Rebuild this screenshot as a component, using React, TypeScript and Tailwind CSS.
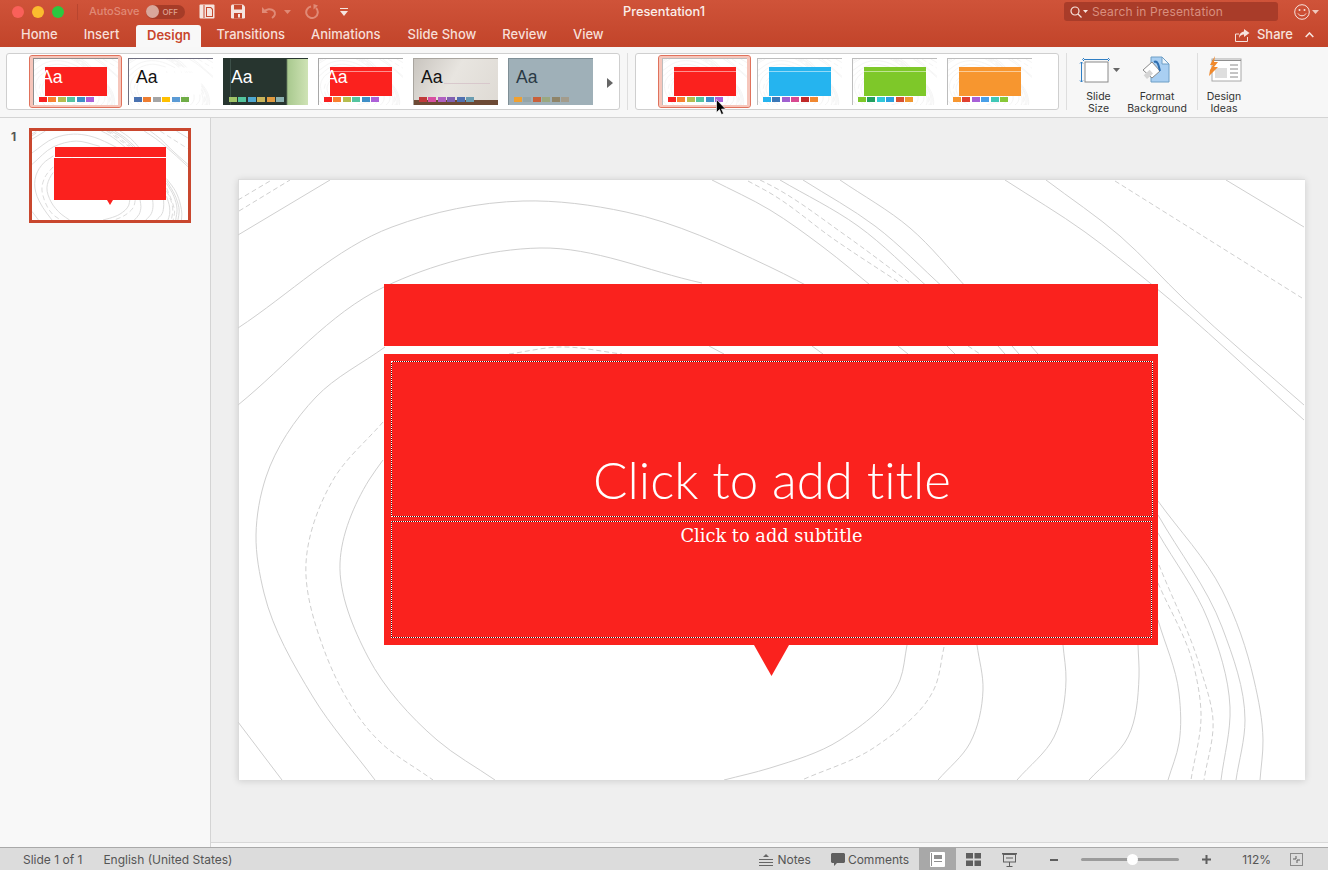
import React from "react";

type P = [number, number];
const spline = (p: P[]) => {
  let d = `M${p[0][0]} ${p[0][1]}`;
  const dist = (a: P, b: P) => Math.hypot(b[0] - a[0], b[1] - a[1]) || 1;
  const slope = (i: number): P => {
    const b = p[i];
    if (i === 0) {
      const l = dist(b, p[1]);
      return [(p[1][0] - b[0]) / l, (p[1][1] - b[1]) / l];
    }
    if (i === p.length - 1) {
      const l = dist(p[i - 1], b);
      return [(b[0] - p[i - 1][0]) / l, (b[1] - p[i - 1][1]) / l];
    }
    const d1 = dist(p[i - 1], b), d2 = dist(b, p[i + 1]);
    return [
      (((b[0] - p[i - 1][0]) / d1) * d2 + ((p[i + 1][0] - b[0]) / d2) * d1) / (d1 + d2),
      (((b[1] - p[i - 1][1]) / d1) * d2 + ((p[i + 1][1] - b[1]) / d2) * d1) / (d1 + d2),
    ];
  };
  for (let i = 0; i < p.length - 1; i++) {
    const b = p[i], c = p[i + 1];
    const h = dist(b, c) / 3;
    const m1 = slope(i), m2 = slope(i + 1);
    d += ` C${b[0] + m1[0] * h} ${b[1] + m1[1] * h} ${c[0] - m2[0] * h} ${c[1] - m2[1] * h} ${c[0]} ${c[1]}`;
  }
  return d;
};

const solid: P[][] = [
  [[238, 235], [330, 180]],
  [[238, 328], [392, 227], [523, 201], [626, 212], [770, 267], [823, 294]],
  [[812, 346], [823, 354]],
  [[238, 405], [384, 287], [540, 248], [702, 283]],
  [[709, 346], [724, 354]],
  [[385, 347], [316, 397], [266, 477], [256, 535], [264, 593], [313, 697], [375, 780]],
  [[383, 460], [369, 480], [340, 563], [368, 657], [437, 740], [495, 780]],
  [[238, 722], [282, 780]],
  [[907, 645], [900, 680], [840, 740], [770, 768], [724, 780]],
  [[977, 645], [983, 690], [970, 743], [938, 780]],
  [[1063, 645], [1066, 680], [1054, 737], [1017, 780]],
  [[1138, 645], [1139, 677], [1128, 737], [1089, 780]],
  [[1158, 620], [1179, 693], [1179, 743], [1168, 780]],
  [[1158, 533], [1208, 620], [1230, 707], [1221, 780]],
  [[1158, 515], [1222, 627], [1245, 720], [1236, 780]],
  [[1158, 501], [1222, 590], [1254, 680], [1263, 740], [1260, 780]],
  [[1226, 180], [1304, 227]],
  [[1005, 180], [1085, 232], [1150, 283], [1304, 420]],
  [[1046, 180], [1120, 236], [1185, 300], [1304, 405]],
  [[840, 180], [910, 228], [968, 289]],
  [[803, 180], [875, 226], [945, 289]],
  [[780, 180], [858, 226], [930, 289]],
  [[712, 180], [770, 210], [823, 247], [875, 289]],
  [[898, 346], [908, 354]],
  [[947, 346], [955, 354]],
  [[998, 346], [1005, 354]],
  [[1012, 346], [1019, 354]],
  [[1031, 346], [1038, 354]],
];
const dashed: P[][] = [
  [[238, 200], [270, 181]],
  [[239, 211], [290, 180]],
  [[383, 422], [333, 480], [306, 563], [323, 647], [378, 740], [433, 780]],
  [[509, 354], [560, 347], [622, 354]],
  [[944, 647], [935, 687], [875, 747], [802, 780]],
  [[1158, 583], [1194, 667], [1201, 713], [1191, 780]],
  [[1159, 565], [1201, 670], [1213, 720], [1204, 780]],
  [[1115, 181], [1302, 298]],
  [[748, 181], [770, 193], [835, 240], [900, 283]],
  [[760, 180], [770, 185], [845, 235], [910, 283]],
  [[968, 346], [980, 354]],
];

function Curves({ className }: { className: string }) {
  return (
    <svg className={className} viewBox="238 180 1067 600" preserveAspectRatio="none">
      {solid.map((p, i) => (
        <path key={i} d={spline(p)} fill="none" stroke="#cfcfcf" strokeWidth="1" vectorEffect="non-scaling-stroke" />
      ))}
      {dashed.map((p, i) => (
        <path key={i} d={spline(p)} fill="none" stroke="#cfcfcf" strokeWidth="1" strokeDasharray="5 3" vectorEffect="non-scaling-stroke" />
      ))}
    </svg>
  );
}

const ui = { fontFamily: "Inter, 'Liberation Sans', sans-serif" };

function Swatches({ colors, left }: { colors: string[]; left: number }) {
  return (
    <div className="absolute top-[38px] flex gap-[1.4px]" style={{ left }}>
      {colors.map((c, i) => (
        <div key={i} className="w-2 h-[5px]" style={{ background: c }} />
      ))}
    </div>
  );
}

type ThumbProps = {
  bg?: string;
  edge: string;
  colors: string[];
  swLeft: number;
  aa?: string;
  aaLeft?: number;
  block?: string;
  blockLeft?: number;
  line?: boolean;
  selected?: boolean;
  extra?: React.ReactNode;
};

function Thumb({ bg = "#ffffff", edge, colors, swLeft, aa, aaLeft = 0, block, blockLeft = 0, line, selected, extra }: ThumbProps) {
  return (
    <div className="relative w-[85px] h-[47px] shrink-0">
      {selected && (
        <div className="absolute -left-[4px] -right-[4px] -top-[3px] -bottom-[3px] rounded-[3px] border border-[#e0725c] shadow-[inset_0_0_0_3px_#f6c6bb]" />
      )}
      <div className="absolute inset-0 overflow-hidden border-t border-l" style={{ background: bg, borderColor: edge }}>
        {!extra && bg === "#ffffff" && <Curves className="absolute inset-0 w-full h-full opacity-20" />}
        {extra}
        {block && (
          <div className="absolute top-[8px] h-[29px] w-[62px]" style={{ left: blockLeft, background: block }}>
            {line && <div className="h-px mt-[4px] bg-white/50" />}
          </div>
        )}
        {aa && (
          <div className="absolute top-[5px] text-[17.5px] leading-[26px]" style={{ left: aaLeft, color: aa, fontFamily: "'Liberation Sans', sans-serif" }}>
            Aa
          </div>
        )}
        <Swatches colors={colors} left={swLeft} />
      </div>
    </div>
  );
}

const Caret = ({ c = "#ffffff" }: { c?: string }) => (
  <svg width="7" height="4" viewBox="0 0 7 4"><path d="M0 0h7L3.500 4z" fill={c} /></svg>
);

function Tab({ label, ml, active }: { label: string; ml: number; active?: boolean }) {
  return (
    <div
      className={
        active
          ? "h-[22px] mt-[2px] w-[65px] flex items-center justify-center rounded-t-[3px] bg-[#f8f8f8] text-[#c8452b] font-semibold"
          : "h-[24px] flex items-center text-[#f7dfd8] font-medium"
      }
      style={{ marginLeft: ml }}
    >
      {label}
    </div>
  );
}

function RibbonLabel({ a, b }: { a: string; b: string }) {
  return (
    <div className="text-[10.5px] leading-[12px] text-center text-[#333]">
      <div>{a}</div>
      <div>{b}</div>
    </div>
  );
}

export default function App() {
  const red = ["#f92020", "#f9802f", "#b5bd4e", "#54c4a0", "#3e8fc8", "#ac60d8"];
  return (
    <div className="w-[1328px] h-[870px] overflow-hidden flex flex-col bg-[#efefef] relative" style={ui}>
      {/* title + tabs */}
      <div className="h-[47px] shrink-0 bg-gradient-to-b from-[#cf5339] to-[#c2442a]">
        <div className="h-[23px] grid grid-cols-[1fr_auto_1fr] items-center">
          <div className="flex items-center pl-[12px]">
            <div className="w-3 h-3 rounded-full bg-[#f9605a]" />
            <div className="w-3 h-3 rounded-full bg-[#fbbc2e] ml-2" />
            <div className="w-3 h-3 rounded-full bg-[#2bc840] ml-2" />
            <div className="w-px h-[16px] bg-[#b8452f] ml-[13px]" />
            <div className="ml-[11px] text-[11px] font-medium text-[#e08a76]">AutoSave</div>
            <div className="ml-[7px] w-[39px] h-[14px] rounded-full bg-[#a63c28] flex items-center">
              <div className="w-[13px] h-[13px] rounded-full bg-[#d9a79b]" />
              <div className="ml-[3px] text-[8px] font-medium text-[#dfa494]">OFF</div>
            </div>
            <svg className="ml-[14px]" width="16" height="15" viewBox="0 0 16 15">
              <rect x="0.5" y="0.5" width="15" height="14" rx="1" fill="#f5e5e0" />
              <path d="M5 1v13" stroke="#c64a30" />
              <path d="M7 3h5l2 2v8H7z" fill="#c64a30" />
              <path d="M8 4h3.500L13 5.500V12H8z" fill="#f5e5e0" />
            </svg>
            <svg className="ml-[16px]" width="14" height="15" viewBox="0 0 14 15">
              <path d="M0 1.500 1 .5h11l2 2V14l-1 .5H1L0 14z" fill="#f5e5e0" />
              <rect x="3" y="1" width="8" height="4.500" fill="#c64a30" />
              <rect x="3" y="9" width="8" height="5.500" fill="#c64a30" />
              <rect x="7" y="10" width="2" height="3.500" fill="#f5e5e0" />
            </svg>
            <svg className="ml-[16px]" width="16" height="14" viewBox="0 0 16 14" fill="none">
              <path d="M1 2v6h6z" fill="#e08a76" />
              <path d="M3 7c2-3 7-4 10-1 2 2 1 5-2 7" stroke="#e08a76" strokeWidth="2" />
            </svg>
            <div className="ml-[7px]"><Caret c="#e08a76" /></div>
            <svg className="ml-[14px]" width="15" height="15" viewBox="0 0 15 15" fill="none">
              <path d="M11 4A5.800 5.800 0 1 1 6 2.500" stroke="#e08a76" strokeWidth="2" />
              <path d="M8.500 0v5.500L13 1.500z" fill="#e08a76" />
            </svg>
            <svg className="ml-[20px]" width="8" height="8" viewBox="0 0 8 8">
              <path d="M0 0h8v1H0zM0 3h8L4 8z" fill="#f5e5e0" />
            </svg>
          </div>
          <div className="text-[12.8px] font-medium text-[#fbeeea]">Presentation1</div>
          <div className="flex items-center justify-end">
            <div className="w-[214px] h-[19px] rounded-[3px] bg-[#a93c29] flex items-center pl-[6px]">
              <svg width="12" height="12" viewBox="0 0 12 12" fill="none">
                <circle cx="5" cy="5" r="4" stroke="#f7e3dd" strokeWidth="1.200" />
                <path d="M8 8l3.500 3.500" stroke="#f7e3dd" strokeWidth="1.200" />
              </svg>
              <div className="ml-[1px]"><svg width="5" height="3" viewBox="0 0 7 4"><path d="M0 0h7L3.500 4z" fill="#f7e3dd" /></svg></div>
              <div className="ml-[4px] text-[12px] tracking-[0.15px] text-[#d98f7f]">Search in Presentation</div>
            </div>
            <svg className="ml-[16px]" width="16" height="16" viewBox="0 0 16 16" fill="none">
              <circle cx="8" cy="8" r="7.300" stroke="#f7e3dd" />
              <circle cx="5.500" cy="6" r="1" fill="#f7e3dd" />
              <circle cx="10.500" cy="6" r="1" fill="#f7e3dd" />
              <path d="M4 9.500c1.500 3 6.500 3 8 0" stroke="#f7e3dd" />
            </svg>
            <div className="ml-[2px] mr-[9px]"><Caret c="#f0c8bd" /></div>
          </div>
        </div>
        <div className="h-[24px] flex text-[13px]">
          <Tab label="Home" ml={21} />
          <Tab label="Insert" ml={26} />
          <Tab label="Design" ml={17} active />
          <Tab label="Transitions" ml={15} />
          <Tab label="Animations" ml={26} />
          <Tab label="Slide Show" ml={27} />
          <Tab label="Review" ml={26} />
          <Tab label="View" ml={26} />
          <div className="ml-auto flex items-center pr-[14px] text-[#f7e3dd] font-medium">
            <svg width="15" height="13" viewBox="0 0 15 13" fill="none">
              <path d="M4 5H.5v7.500h12V8" stroke="#f7e3dd" />
              <path d="M9 0l5.500 4L9 8V5.500C6.500 5.500 5 7 4 9c0-4 2-6 5-6.500z" fill="#f7e3dd" />
            </svg>
            <div className="ml-[7px]">Share</div>
            <svg className="ml-[12px]" width="9" height="6" viewBox="0 0 9 6" fill="none">
              <path d="M.7 5l3.800-4 3.800 4" stroke="#f7e3dd" strokeWidth="1.600" />
            </svg>
          </div>
        </div>
      </div>

      {/* ribbon */}
      <div className="h-[71px] shrink-0 bg-[#f7f7f7] border-b border-[#d4d4d4] flex items-start pt-[6px] pl-[6px]">
        <div className="w-[614px] h-[57px] border border-[#cfcfcf] rounded-[3px] bg-white flex pl-[26px] pt-[4px] gap-[10px]">
          <Thumb edge="#8f8f8f" colors={red} swLeft={5} aa="#ffffff" aaLeft={7} block="#fb211e" blockLeft={11} selected />
          <Thumb edge="#6f6f80" colors={["#4a72b0", "#ed7d31", "#a5a5a5", "#ffc000", "#5b9bd5", "#70ad47"]} swLeft={5} aa="#111111" aaLeft={7} />
          <Thumb bg="linear-gradient(90deg,#27352f 74%,#a9c98f 76%,#cfe3b5 100%)" edge="#27352f" colors={["#a0c468", "#52c49c", "#4fa8d0", "#c8b45a", "#e09a40", "#8ab0b0"]} swLeft={5} aa="#ffffff" aaLeft={7} extra={<div className="absolute left-[6px] top-0 bottom-0 w-px bg-[#3d5049]" />} />
          <Thumb edge="#a8a8a8" colors={red} swLeft={5} aa="#ffffff" aaLeft={7} block="#fb211e" blockLeft={11} line />
          <Thumb bg="linear-gradient(120deg,#c9c5bf 0%,#e8e5e0 45%,#dedad4 100%)" edge="#a9a59f" colors={["#c03a3a", "#d84fa0", "#b060c0", "#8060b0", "#5070b0", "#6a9cb0"]} swLeft={5} aa="#111111" aaLeft={7} extra={<><div className="absolute left-[30px] right-[8px] top-[24px] h-px bg-[#d8c8cc]" /><div className="absolute left-0 right-0 bottom-0 h-[5px] bg-[#6d4a35]" /></>} />
          <Thumb bg="#9fb0b8" edge="#7f8f96" colors={["#f0a030", "#95a5a8", "#c8603a", "#9aa880", "#8f8468", "#a39c8c"]} swLeft={5} aa="#2a3a45" aaLeft={7} />
          <div className="ml-[3px] mt-[20px]">
            <svg width="8" height="10" viewBox="0 0 8 10"><path d="M1 0l6 5-6 5z" fill="#666" /></svg>
          </div>
        </div>
        <div className="ml-[7px] w-px h-[57px] bg-[#dedede]" />
        <div className="ml-[7px] w-[424px] h-[57px] border border-[#cfcfcf] rounded-[3px] bg-white flex pl-[26px] pt-[4px] gap-[10px]">
          <Thumb edge="#bdbdbd" colors={red} swLeft={5} block="#fb211e" blockLeft={11} line selected />
          <Thumb edge="#bdbdbd" colors={["#25b4ef", "#3a78b8", "#a060d0", "#d84890", "#c02828", "#f08830"]} swLeft={5} block="#25b4ef" blockLeft={11} line />
          <Thumb edge="#bdbdbd" colors={["#7ec829", "#22a060", "#30c8d8", "#28a0e0", "#d85030", "#f09830"]} swLeft={5} block="#7ec829" blockLeft={11} line />
          <Thumb edge="#bdbdbd" colors={["#f7962f", "#e04030", "#a860d8", "#48a0e8", "#40c8b8", "#88c838"]} swLeft={5} block="#f7962f" blockLeft={11} line />
        </div>
        <div className="ml-[7px] w-px h-[57px] bg-[#dedede]" />
        <div className="w-[63px] flex flex-col items-center">
          <svg className="mt-[4px] mb-[7px] mr-[3px]" width="46" height="27" viewBox="0 0 46 27" fill="none">
            <rect x="11" y="5" width="23" height="20" fill="#fff" stroke="#8a8a8a" />
            <path d="M10 2.500h24M10 1l-1.500 1.500L10 4M34 1l1.500 1.500L34 4" stroke="#2f7ec4" />
            <path d="M7.500 5v20M6 6.500 7.500 5 9 6.500M6 23.500 7.500 25 9 23.500" stroke="#2f7ec4" />
            <path d="M39 11h7l-3.500 4z" fill="#666" />
          </svg>
          <RibbonLabel a="Slide" b="Size" />
        </div>
        <div className="w-[54px] flex flex-col items-center">
          <svg className="mt-[3px] mb-[8px]" width="32" height="27" viewBox="0 0 32 27" fill="none">
            <path d="M10 1h11l7 7v18H10z" fill="#a9cff2" stroke="#6f9fc6" />
            <path d="M21 1v7h7z" fill="#eef5fb" stroke="#6f9fc6" />
            <path d="M2 14 11 6l8 9-8 7z" fill="#fff" stroke="#8a8a8a" />
            <path d="M13 6c4-2 5 5 6 9" stroke="#2f6fb0" strokeWidth="2" />
            <rect x="3" y="16" width="8" height="5" fill="#d5d5d5" transform="rotate(-42 7 18)" />
          </svg>
          <div className="-mx-2"><RibbonLabel a="Format" b="Background" /></div>
        </div>
        <div className="ml-[13px] w-px h-[57px] bg-[#dedede]" />
        <div className="w-[52px] flex flex-col items-center">
          <svg className="mt-[3px] mb-[8px] ml-[2px]" width="33" height="27" viewBox="0 0 33 27" fill="none">
            <rect x="3" y="3" width="29" height="22" fill="#fff" stroke="#a8a8a8" />
            <path d="M3 4.500h29" stroke="#8f8f8f" />
            <rect x="6" y="12" width="12" height="10" fill="#dedede" />
            <path d="M21 9h8M21 13h8M21 17h8M21 21h8" stroke="#8a8a8a" />
            <path d="M6 0 1 9h3l-3 5-1 6 9-9H5l4-5H5z" fill="#f08a2e" />
          </svg>
          <RibbonLabel a="Design" b="Ideas" />
        </div>
      </div>

      {/* body */}
      <div className="flex-1 min-h-0 flex">
        <div className="w-[211px] shrink-0 bg-[#f8f8f8] border-r border-[#d4d4d4] flex items-start pt-[10px] pl-[11px]">
          <div className="text-[12px] leading-[18px] font-bold text-[#555] w-[18px]">1</div>
          <div className="relative w-[162px] h-[95px] border-[3px] border-[#c9472e] bg-white overflow-hidden pt-[16px] pl-[22px]">
            <Curves className="absolute inset-0 w-full h-full opacity-70" />
            <div className="relative ml-px w-[111px] h-[10px] bg-[#fb211e]" />
            <div className="relative w-[112px] h-[42px] mt-px bg-[#fb211e]" />
            <div className="relative ml-[53px] w-0 h-0 border-x-[3px] border-x-transparent border-t-[5px] border-t-[#fb211e]" />
          </div>
        </div>
        <div className="flex-1 min-w-0 flex flex-col">
          <div className="flex-1 min-h-0 pl-[27px] pt-[61px]">
            <div className="relative w-[1067px] h-[601px] bg-white border-t border-l border-[#dcdcdc] shadow-[0_1px_7px_rgba(0,0,0,0.14)] pt-[104px] pl-[145px]">
              <Curves className="absolute -top-px -left-px w-[1067px] h-[600px] mt-px" />
              <div className="relative w-[774px]">
                <div className="h-[62px] bg-[#fa221e]" />
                <div className="mt-[8px] h-[291px] bg-[#fa221e] pt-[7px] pl-[7px] pr-[5px]">
                  <div className="h-[156px] border border-dotted border-white bg-[#4a0e0e]">
                    <div className="h-full bg-[#fa221e] flex items-end justify-center pb-[6px]">
                      <div className="text-[51px] leading-[60px] font-light text-white [font-variant-ligatures:none]" style={{ fontFamily: "Lato, 'Open Sans', sans-serif" }}>
                        Click to add title
                      </div>
                    </div>
                  </div>
                  <div className="mt-[4px] mr-px h-[117px] border border-dotted border-white bg-[#4a0e0e]">
                    <div className="h-full bg-[#fa221e] flex justify-center pt-px">
                      <div className="text-[17.8px] leading-[26px] text-white" style={{ fontFamily: "'DejaVu Serif', serif" }}>
                        Click to add subtitle
                      </div>
                    </div>
                  </div>
                </div>
                <svg className="ml-[370px] block" width="35" height="31" viewBox="0 0 35 31">
                  <path d="M0 0h35L17.500 31z" fill="#fa221e" />
                </svg>
              </div>
            </div>
          </div>
          <div className="h-[5px] shrink-0 bg-[#f8f8f8] border-t border-[#d8d8d8]" />
        </div>
      </div>

      {/* status bar */}
      <div className="h-[23px] shrink-0 bg-[#dcdcdc] border-t border-[#a9a9a9] pt-px flex items-center text-[12px] text-[#555]">
        <div className="ml-[23px]">Slide 1 of 1</div>
        <div className="ml-[21px]">English (United States)</div>
        <svg className="ml-auto" width="14" height="12" viewBox="0 0 14 12" fill="none">
          <path d="M0 5.500h14M0 8.500h14M0 11.500h14" stroke="#666" />
          <path d="M4 3l3-3 3 3z" fill="#666" />
        </svg>
        <div className="ml-[5px]">Notes</div>
        <svg className="ml-[20px]" width="14" height="13" viewBox="0 0 14 13"><path d="M1 0h12l1 1v8l-1 1H6l-3 3v-3H1L0 9V1z" fill="#5f5f5f" /></svg>
        <div className="ml-[3px]">Comments</div>
        <div className="ml-[10px] -mt-px w-[37px] h-[22px] bg-[#a8a8a8] flex items-center justify-center">
          <svg width="15" height="15" viewBox="0 0 15 15">
            <rect width="15" height="15" rx="1" fill="#fff" />
            <rect x="4" y="3" width="8" height="4" fill="#8f8f8f" />
            <rect x="4" y="9" width="8" height="1" fill="#8f8f8f" />
            <rect x="1" y="1" width="1" height="13" fill="#8f8f8f" />
          </svg>
        </div>
        <svg className="ml-[10px]" width="15" height="13" viewBox="0 0 15 13" fill="#5f5f5f">
          <rect width="7" height="5.500" /><rect x="8.500" width="6.500" height="5.500" /><rect y="7.500" width="7" height="5.500" /><rect x="8.500" y="7.500" width="6.500" height="5.500" />
        </svg>
        <svg className="ml-[21px]" width="15" height="14" viewBox="0 0 15 14" fill="none">
          <path d="M0 .75h15" stroke="#5f5f5f" strokeWidth="1.500" />
          <rect x="1.500" y="1.500" width="12" height="7.500" stroke="#5f5f5f" />
          <path d="M7.500 9v4M4.500 13.500h6M4 5h7" stroke="#5f5f5f" />
        </svg>
        <div className="ml-[33px] w-[8px] h-[2px] bg-[#5f5f5f]" />
        <div className="ml-[23px] w-[98px] h-[3px] rounded-full bg-[#9b9b9b] flex items-center">
          <div className="ml-[46px] w-[11px] h-[11px] rounded-full bg-white shrink-0" />
        </div>
        <svg className="ml-[23px]" width="9" height="9" viewBox="0 0 9 9"><path d="M3.500 0h2v3.500H9v2H5.500V9h-2V5.500H0v-2h3.500z" fill="#5f5f5f" /></svg>
        <div className="ml-[31px]">112%</div>
        <svg className="ml-[19px] mr-[25px]" width="13" height="13" viewBox="0 0 13 13" fill="none">
          <rect x=".5" y=".5" width="12" height="12" stroke="#8a8a8a" />
          <path d="M3 6h3V3M10 7H7v3" stroke="#5f5f5f" />
        </svg>
      </div>

      {/* mouse pointer */}
      <svg className="absolute left-[716px] top-[99px]" width="10" height="17" viewBox="0 0 10 17">
        <path d="M.5.500v13l3-3 2 5 2-1-2-4.500H9.500z" fill="#000" stroke="#fff" strokeWidth=".6" />
      </svg>
    </div>
  );
}
